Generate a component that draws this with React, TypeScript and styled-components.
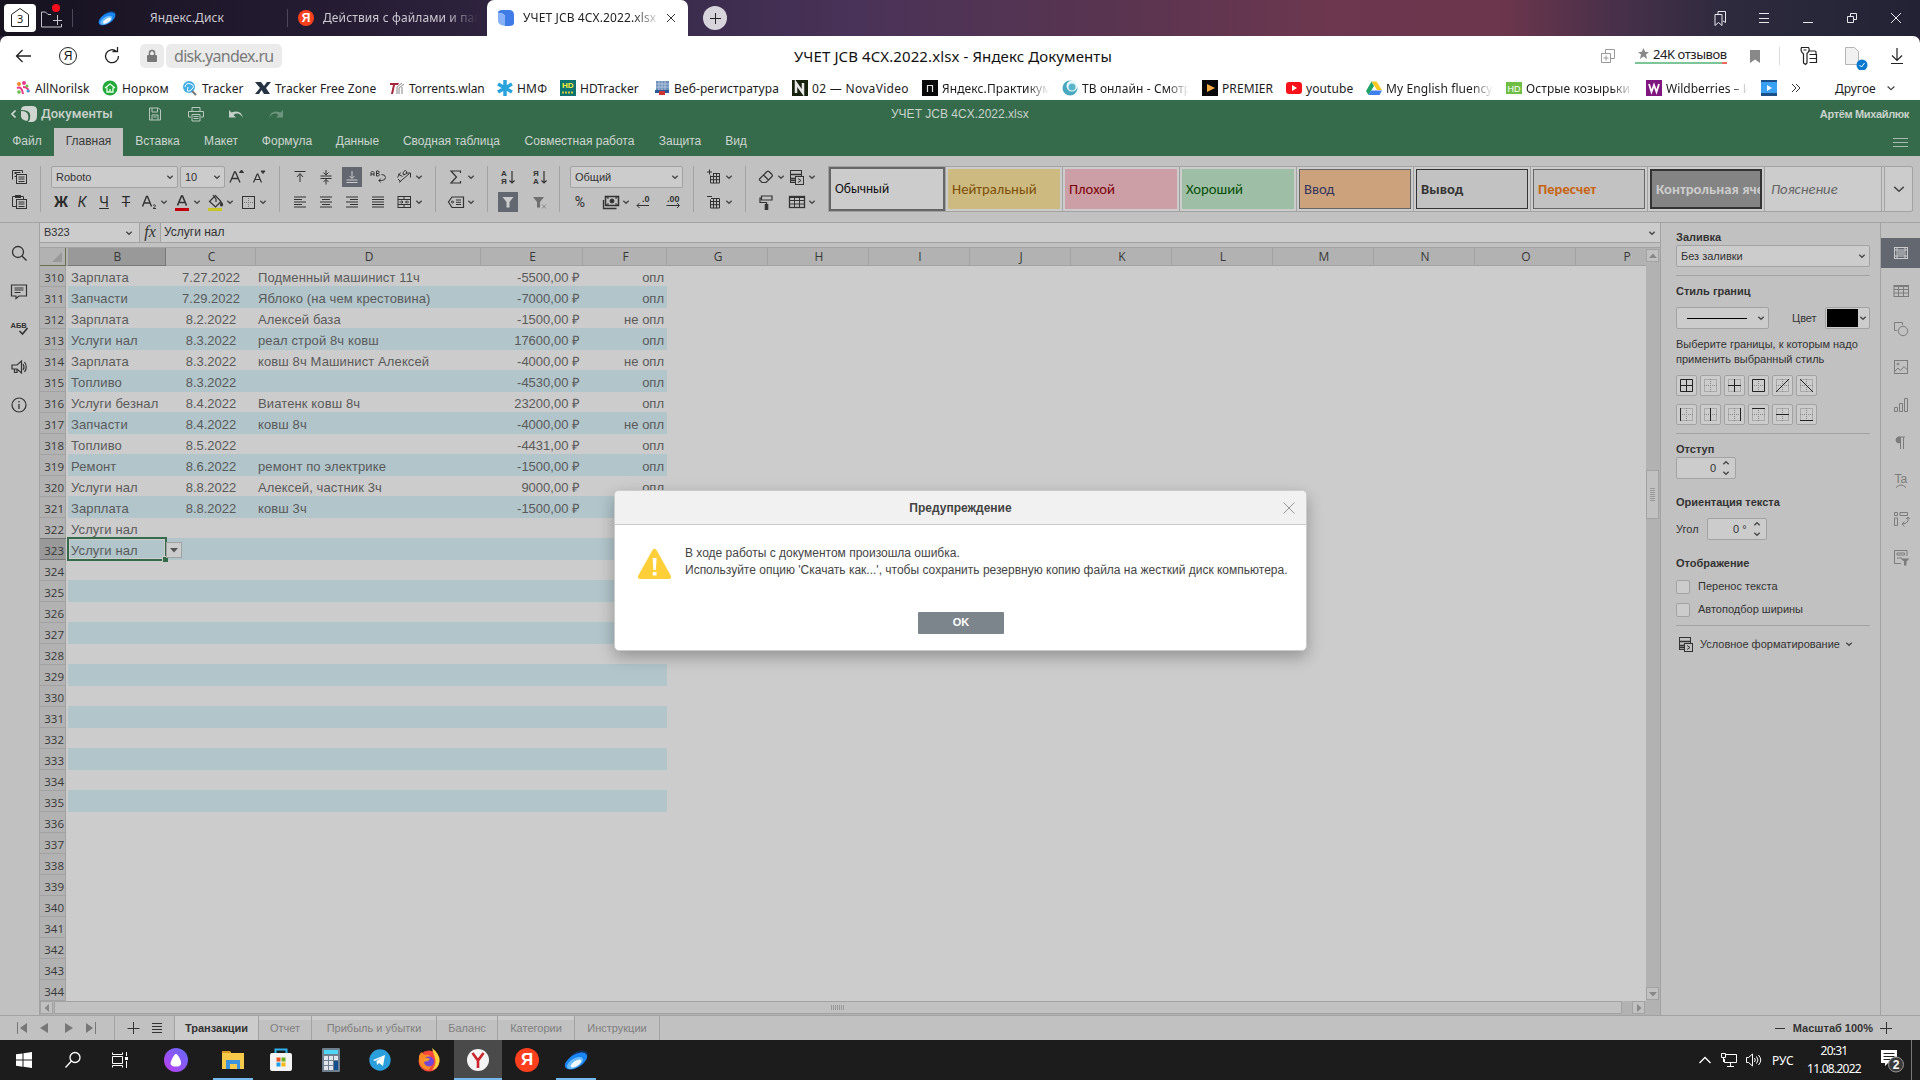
import React from 'react';
import styled, { createGlobalStyle, css } from 'styled-components';

const INK = '#333333';
const LINE = '#a2a2a2';
const PANEL = '#c1c1c1';
const FIELD = '#cccccc';
const GREEN = '#356b4b';
const ARIAL = '"Liberation Sans", Arial, sans-serif';
const SEGOE = '"Noto Sans", "Open Sans", sans-serif';

const Global = createGlobalStyle`
  * { box-sizing: border-box; }
  html, body { margin: 0; padding: 0; overflow: hidden; background: ${PANEL}; }
  svg { display: block; flex: none; }
`;

/* ---------- icons ---------- */

const ICONS: Record<string, React.ReactNode> = {
  copy: <><path d="M3.500 12.500V3.500H13.500V6M5.500 6.500h2M5.500 9.500h2M5.500 5.500h6" /><rect x="7.500" y="7.500" width="10" height="9" fill={PANEL} /><path d="M9.500 10h6M9.500 12h6M9.500 14.500h6" /></>,
  paste: <><path d="M7 14.500H3.500V4.500h11V7" /><path d="M6 4.500h6" strokeWidth="3" /><rect x="7.500" y="7.500" width="10" height="9" fill={PANEL} /><path d="M9.500 10h6M9.500 12h6M9.500 14.500h6" /></>,
  incFont: <><path d="M3 15.500L7.500 5h1L13 15.500M5 11.500h6" strokeWidth="1.300" /><path d="M12.500 5.500L14.500 3l2 2.500z" fill={INK} /></>,
  decFont: <><path d="M4.500 15.500L8.200 7h.6l3.700 8.500M6 12.500h5" strokeWidth="1.200" /><path d="M12 4h4l-2 2.500z" fill={INK} /></>,
  sub: <><path d="M2.500 14.500L6.500 4.500h1l4 10M4.500 11h5.500" strokeWidth="1.400" /><path d="M13 13.500q1.500-1.500 2.500 0q0 1-2.500 3h3" strokeWidth="1" /></>,
  color: <><path d="M5.500 13.500L9.500 4h1l4 9.500M7.500 10.500h5" strokeWidth="1.600" /><path d="M3 17.500h14" stroke="#c4000c" strokeWidth="3" /></>,
  fill: <><path d="M4.500 9.500l6-6 5.500 6-5.500 5.500zM8 3l3 4v3" strokeWidth="1.200" /><path d="M16.500 10q2.500 4 0 4t0-4" fill={INK} /><path d="M3 17.500h14" stroke="#c6c626" strokeWidth="3" /></>,
  border: <><rect x="4.500" y="4.500" width="12" height="12" /><path d="M10.500 6v10M6 10.500h10" strokeDasharray="1 1" stroke="#777" /></>,
  top: <><path d="M4.500 4.500h11M7 10l3-3.500 3 3.500M10 7v8" /></>,
  middle: <><path d="M4.500 9h11M4.500 11.500h11M10 3v5M10 12.500v5M7.500 5.500L10 8l2.500-2.500M7.500 15l2.500-2.500 2.500 2.500" /></>,
  bottom: <><path d="M4.500 13h11M4.500 15.500h11M10 4v7M7.500 9l2.500 2.500L12.500 9" stroke="#ccc" /></>,
  wrap: <><path d="M3 9V5.500L4.500 4 6 5.500V9M3 7h3M8.500 4v5h2q2-1.200 0-2.500q1.500-1.500 0-2.500zM8.500 6.500h2M13.500 7.500q4 0 4 3t-4 3h-2.500M12.800 11.500l-2 2 2 2" /></>,
  orient: <><path d="M5 15.500l10.500-9M12 6h4.500v4.500M4 7l4.500 2.500M3.500 10.500l3-5M4 12l3 3M9 6q2-4 3.500-1.500T9.500 8z" /></>,
  left: <path d="M4 4.500h12M4 7h8M4 9.500h12M4 12h8M4 14.500h12" transform="translate(0 .5)" />,
  center: <path d="M4 5h12M6 7.500h8M4 10h12M6 12.500h8M4 15h12" />,
  right: <path d="M4 5h12M8 7.500h8M4 10h12M8 12.500h8M4 15h12" />,
  justify: <path d="M4 5h12M4 7.500h12M4 10h12M4 12.500h12M4 15h12" />,
  merge: <><rect x="4" y="4.500" width="12.500" height="11" /><path d="M4 7.500h12.500M4 12.500h12.500M10 4.500v3M10 12.500v3M5.500 10h3.500M11.500 10H15M7.500 8.500L9 10l-1.500 1.500M13 8.500L11.500 10l1.500 1.500" /></>,
  sum: <path d="M14.500 6V4H5l5.500 6L5 16h9.500v-2" strokeWidth="1.200" />,
  tag: <><path d="M6 5h11.500v10.500H6L2.500 10z" strokeWidth="1.200" /><circle cx="6.500" cy="10" r="1" /><path d="M10 8h5M10 10.300h5M10 12.500h5" /></>,
  sortA: <><path d="M14 4v12M11.500 13.500L14 16l2.500-2.500" strokeWidth="1.200" /><text x="3" y="9" fontSize="8" fontWeight="700">А</text><text x="3" y="17" fontSize="8" fontWeight="700">Я</text></>,
  sortZ: <><path d="M14 4v12M11.500 13.500L14 16l2.500-2.500" strokeWidth="1.200" /><text x="3" y="9" fontSize="8" fontWeight="700">Я</text><text x="3" y="17" fontSize="8" fontWeight="700">А</text></>,
  funnel: <path d="M4.500 5h11l-4 5v5.500h-3V10z" fill="#ccc" stroke="none" />,
  funnelX: <><path d="M3 5h11l-4 5v5.500H7V10z" fill="#6f6f6f" stroke="none" /><path d="M12 12.500l4 4M16 12.500l-4 4" stroke="#888" /></>,
  money: <><path d="M2.500 8v8.500h13" strokeWidth="1.300" /><rect x="4.500" y="4.500" width="13" height="9" strokeWidth="1.500" /><circle cx="11" cy="9" r="2" fill={INK} /><path d="M5 5h2v2M17 5h-2v2M5 13h2v-2M17 13h-2v-2" /></>,
  dec0: <><text x="9" y="10" fontSize="9" fontWeight="700">.0</text><path d="M16 13.500H4M6.500 11L4 13.500 6.500 16" /></>,
  dec00: <><text x="4" y="10" fontSize="9" fontWeight="700">.00</text><path d="M3.500 13.500H16M14 11l2.500 2.500L14 16" /></>,
  insCell: <><path d="M3 5h5M5.500 2.500v5M6.500 8.500v7.500h9V6.500H9M9.500 6.500V16M12.500 6.500V16M6.500 9.500h9M6.500 12.700h9" /></>,
  delCell: <><path d="M3 4.500h5M6.500 7.500v8.500h9V6.500H7M9.500 6.500V16M12.500 6.500V16M6.500 9.500h9M6.500 12.700h9" /></>,
  eraser: <><path d="M3.500 12l7.500-7.500q1-.8 2 0l3 3q.8 1 0 2L10 15.500H6L3.500 13zM7.500 8l5 5" strokeWidth="1.200" /></>,
  cond: <><rect x="3.500" y="3.500" width="11" height="12" /><path d="M3.500 7.500h11M3.500 11.500h11M4 13.500h4" strokeWidth="1.300" /><rect x="8.500" y="9.500" width="8" height="8" fill={PANEL} /><path d="M11 11.500l3 2-3 2" /></>,
  painter: <><path d="M5.500 4h10.500v4H5.500zM5.500 6H4v4.500h6.500V13" strokeWidth="1.200" /><rect x="9.200" y="12.500" width="2.600" height="5" fill={INK} /></>,
  table: <><rect x="2.500" y="4.500" width="15" height="11" strokeWidth="1.300" /><path d="M2.500 5.500h15M2.500 8.500h15M2.500 12h15M7.500 5v10M12.500 5v10" /></>,
  search: <><circle cx="9" cy="9" r="5.500" strokeWidth="1.300" /><path d="M13 13l4.500 4.500" strokeWidth="1.400" /></>,
  comment: <><path d="M2.500 4h15v11H10l-3 2.500V15H2.500z" strokeWidth="1.200" /><path d="M5.500 7h9M5.500 9h9M5.500 11.500h6" /></>,
  spell: <><text x="1.500" y="9" fontSize="7.500" fontWeight="700">АБВ</text><path d="M10.500 12l3 3 5-6" strokeWidth="1.600" /></>,
  horn: <><path d="M3 8h5l4.500-4v12L8 12H3zM5.500 12v3.500h2.500V12M14 7q2 3 0 6M15.500 5q3.500 5 0 10" strokeWidth="1.200" /></>,
  info: <><circle cx="10" cy="10" r="7" strokeWidth="1.200" /><path d="M10 9v5M10 6v1.500" strokeWidth="1.300" /></>,
  rCell: <><rect x="3.500" y="4.500" width="13" height="11" stroke="#ccc" /><path d="M3.500 7h13M3.500 13h13M6 4.500v11M14 4.500v11" stroke="#ccc" /><rect x="7" y="8" width="6" height="4" fill="#9a9da2" stroke="none" /></>,
  rTable: <><rect x="3" y="4.500" width="14.500" height="11" /><path d="M3 5.500h14M3 8.500h14M3 12h14M7.500 5v10M12.500 5v10" /></>,
  rShape: <><path d="M6 11.500H3.500V3.500h8V6" /><circle cx="12" cy="12" r="4.700" /></>,
  rImage: <><rect x="3.500" y="3.500" width="13" height="13" /><circle cx="7" cy="7" r="1" /><path d="M4 14l3-3 2.500 2.500L13 9.500l3.500 3.500" /></>,
  rChart: <path d="M3.500 12.500h3v4h-3zM8.500 8.500h3v8h-3zM13.500 3.500h3v13h-3z" />,
  rPara: <><path d="M8.500 10q-3.500 0-3.500-3t3.500-3z" fill="#7c7c7c" /><path d="M7 4h7M9.500 4v12M12.500 4v12" /></>,
  rArt: <><text x="3.500" y="11.500" fontSize="12" fill="#7c7c7c">Ta</text><path d="M5 16.500q5-5 10 0" /></>,
  rPivot: <><path d="M3.500 3.500h3v3h-3zM9 3.500h7.500v3H9zM3.500 9h3v7.500h-3zM17 8v4q-1 3-6 3M13.500 12.500L11 15l2.500 2.500M15 10l2-2 2 2" /></>,
  rSlicer: <><path d="M10 16.500H3.500V3.500h12.500V9M6 6h7.500v2H6zM6 11h5" /><path d="M9.500 11.500h9l-3 3v4h-2.500v-4z" fill="#7c7c7c" stroke="none" /></>,
  save: <><path d="M4.500 4h9l2 2v10h-11zM7 4v4h5.500V4M7 16v-5h6v5M8.500 13h3" /></>,
  print: <><path d="M6 7V3.500h8V7M5 13H2.500V7.500h15V13H15M6 10.500h8v6.500H6zM7.500 12.500h5M7.500 14.500h5" /></>,
  undo: <path d="M3 6v7.500h7L7.500 11q5-4 9.500 3Q15 5 5.500 8.500z" fill="#c4d0c8" stroke="none" />,
  redo: <path d="M17 6v7.500h-7l2.500-2.500Q7.500 7 3 14 5 5 14.500 8.500z" fill="#6d957d" stroke="none" />,
};

const Glyph = styled.svg<{ $ml?: number; $ink?: string }>`
  margin-left: ${p => p.$ml ?? 0}px;
  fill: none;
  stroke: ${p => p.$ink ?? INK};
  stroke-width: 1;
  text { fill: ${p => p.$ink ?? INK}; stroke: none; font-family: ${ARIAL}; }
`;
const I = ({ n, ml, ink, s = 20 }: { n: string; ml?: number; ink?: string; s?: number }) => (
  <Glyph width={s} height={s} viewBox="0 0 20 20" $ml={ml} $ink={ink}>{ICONS[n]}</Glyph>
);
const Chev = ({ ml = 1, up, s = 8, sw = 1.4 }: { ml?: number; up?: boolean; s?: number; sw?: number }) => (
  <Glyph width={s} height={s} viewBox="0 0 8 8" $ml={ml} $ink="#484848">
    <path d={up ? 'M1.300 5.200L4 2.700l2.700 2.500' : 'M1.300 2.800L4 5.300l2.700-2.500'} strokeWidth={sw} />
  </Glyph>
);

/* ---------- browser chrome ---------- */

const Screen = styled.div`
  width: 1920px; height: 1080px; overflow: hidden; position: relative;
  display: flex; flex-direction: column;
  background: ${PANEL}; color: ${INK}; font: 11px/1 ${ARIAL};
`;
const TabStrip = styled.div`
  height: 36px; flex: none; display: flex; align-items: center; padding-left: 4px;
  background: linear-gradient(90deg, #16121f 0, #251c33 340px, #3c2c4e 700px, #4a3358 860px, #583450 1100px, #6c374f 1330px, #6c364c 1500px, #47304a 1620px, #2d2a3e 1730px, #232234 1920px);
`;
const HomeBox = styled.div`
  width: 32px; height: 28px; border-radius: 4px; background: #fff; display: grid; place-items: center;
`;
const TabLabel = styled.div<{ $w: number; $ml?: number; $dark?: boolean }>`
  width: ${p => p.$w}px; margin-left: ${p => p.$ml ?? 0}px; overflow: hidden; white-space: nowrap;
  font: 12px/20px ${SEGOE}; letter-spacing: 0.12px;
  color: ${p => (p.$dark ? '#222' : '#cbc8d0')};
`;
const fade = css`mask-image: linear-gradient(90deg, #000 80%, transparent);`;
const FadeLabel = styled(TabLabel)`${fade}`;
const TabDivider = styled.div<{ $ml: number }>`width: 1px; height: 18px; background: #4d475a; margin-left: ${p => p.$ml}px;`;
const ActiveTab = styled.div`
  width: 201px; height: 36px; margin-left: 9px; padding-left: 11px; background: #fff; border-radius: 7px 7px 0 0;
  display: flex; align-items: center;
`;
const PlusTab = styled.div`
  width: 24px; height: 24px; border-radius: 50%; margin-left: 15px; background: #d8d4dc; display: grid; place-items: center;
`;
const WinButtons = styled.div`
  margin-left: auto; margin-right: 2px; display: flex;
  svg { width: 44px; height: 20px; }
`;
const AddressWrap = styled.div`background: #2a2138; height: 38px; flex: none;`;
const AddressBar = styled.div`
  height: 38px; background: #fff; border-radius: 7px 7px 0 0; display: flex; align-items: center; padding: 2px 0 0 12px;
`;
const LockBox = styled.div`width: 24px; height: 24px; margin-left: 18px; border-radius: 5px; background: #ebebeb; display: grid; place-items: center;`;
const Domain = styled.div`
  width: 116px; height: 24px; margin-left: 2px; padding-left: 8px; border-radius: 5px; background: #ebebeb; color: #7a7a7a;
  font: 16px/24px ${SEGOE}; letter-spacing: -0.7px; white-space: nowrap;
`;
const PageTitle = styled.div`
  margin-left: 512px; width: 320px; font: 15px/24px ${SEGOE}; letter-spacing: 0.1px; color: #111; white-space: nowrap;
`;
const Reviews = styled.div`
  width: 92px; height: 19px; margin: 0 0 3px 19px; display: flex; gap: 4px; align-items: center; padding-left: 3px;
  font: 13px/16px ${SEGOE}; letter-spacing: -0.45px; color: #222; white-space: nowrap;
  border-bottom: 2px solid; border-image: linear-gradient(90deg, #7cc598 94%, #ea6a62 94%) 1;
`;
const Bookmarks = styled.div`height: 26px; flex: none; background: #fff; display: flex; align-items: center; padding: 2px 0 0 15px;`;
const Bookmark = styled.div<{ $w: number; $fade?: boolean; $ls?: number }>`
  width: ${p => p.$w}px; flex: none; display: flex; align-items: center; gap: 4px;
  font: 12px/20px ${SEGOE}; color: #1c1c1c; letter-spacing: ${p => p.$ls ?? 0}px; white-space: nowrap;
  span { padding-top: 1px; overflow: hidden; width: ${p => p.$w - 33}px; ${p => p.$fade && fade} ${p => !p.$fade && 'overflow: visible;'} }
`;

const marks: [string, number, React.ReactNode, boolean, number][] = [
  ['AllNorilsk', 87, <><circle cx="4" cy="4" r="2" fill="#f08a24" /><circle cx="9" cy="3" r="2" fill="#e8388a" /><path d="M2 8q5-2 6 6M8 7q5 0 6 5" stroke="#e8388a" strokeWidth="2" fill="none" /><circle cx="12" cy="6" r="1.500" fill="#6bbd45" /><circle cx="4" cy="12" r="1.800" fill="#6bbd45" /><circle cx="13" cy="11" r="1.500" fill="#3aa6dd" /></>, false, 0.1],
  ['Норком', 80, <><circle cx="8" cy="8" r="7.500" fill="#23a83a" /><path d="M3 8l5-4 5 4M5 7.500V12h6V7.500M8 9v3" stroke="#eaffea" strokeWidth="1.300" fill="none" /></>, false, 0.2],
  ['Tracker', 73, <><circle cx="7" cy="7" r="6" fill="#42aee4" /><path d="M3 7q1-5 6-3t0 6-3-3" stroke="#fff" fill="none" /><path d="M10 11l4 4" stroke="#777" strokeWidth="2" /></>, false, 0],
  ['Tracker Free Zone', 134, <path d="M0 2h6l3 4 3-4h4l-5 6 4 6H9L6.500 10 4 14H0l5-6z" fill="#263342" />, false, 0.05],
  ['Torrents.wlan', 108, <><path d="M1 3h9L9 5H6L4 14H2l2-9H1z" fill="#a5253a" /><path d="M8 14V7l5-4M10 14V8l5-4M13 14V7" stroke="#888" fill="none" /></>, false, -0.1],
  ['НМФ', 63, <path d="M8 0v16M1 4l14 8M15 4L1 12" stroke="#28a3dc" strokeWidth="3.500" />, false, 0.2],
  ['HDTracker', 94, <><rect width="16" height="16" fill="#0e7471" /><text x="2" y="8" fontSize="8" fontWeight="700" fill="#ffef3c">HD</text><path d="M2 12.500h12" stroke="#d5c93c" strokeWidth="2" strokeDasharray="2 1" /></>, false, 0],
  ['Веб-регистратура', 138, <><rect x="2" y="1" width="13" height="9" fill="#6d8fbc" /><path d="M2 4h13M2 7h13M5 1v9M8 1v9M11 1v9" stroke="#c9d7e8" strokeWidth=".7" /><path d="M1 10h14v3H1z" fill="#295998" /><path d="M5 11h6v4H5z" fill="#cc3434" /></>, false, 0.12],
  ['02 — NovaVideo', 130, <><rect width="16" height="16" fill="#16220c" /><path d="M4 13V3l7 10V3" stroke="#e8e8e8" strokeWidth="2.500" fill="none" /></>, false, 0.3],
  ['Яндекс.Практикум', 140, <><rect width="16" height="16" fill="#080808" /><path d="M5.500 12V5.500h5V12" stroke="#ddd" strokeWidth="1.200" fill="none" /></>, true, 0.1],
  ['ТВ онлайн - Смотреть', 140, <><circle cx="8" cy="8" r="7.500" fill="#48a8c0" /><circle cx="10" cy="6" r="5.500" fill="#e8f8fb" /><circle cx="10" cy="7" r="3.500" fill="#58b5ca" /></>, true, 0.1],
  ['PREMIER', 84, <><rect width="16" height="16" fill="#080808" /><path d="M5 4l8 4-8 4z" fill="#f5a940" /></>, false, 0.1],
  ['youtube', 80, <><rect y="2" width="16" height="12" rx="3" fill="#f6121a" /><path d="M6 5l5 3-5 3z" fill="#fff" /></>, false, 0.1],
  ['My English fluency', 140, <><path d="M5.500 1.500h5L16 10h-5z" fill="#fdc921" /><path d="M5.500 1.500L0 11l2.500 4L8 6z" fill="#20a464" /><path d="M2.500 15L5 10.500h11L13.500 15z" fill="#3f7fee" /></>, true, 0.1],
  ['Острые козырьки', 140, <><rect y="2" width="16" height="12" fill="#6fbe44" /><text x="1.500" y="11.500" fontSize="9" fill="#fff">HD</text></>, true, 0.1],
  ['Wildberries – Ин', 115, <><rect width="16" height="16" fill="#80167f" /><path d="M3 4l2.500 8L8 5l2.500 7L13 4" stroke="#fff" strokeWidth="1.800" fill="none" /></>, true, 0],
];

const LeftArrow = () => <svg width="20" height="20" viewBox="0 0 20 20" fill="none" stroke="#222" strokeWidth="1.300"><path d="M19 10H4.500M10.500 4l-6 6 6 6" /></svg>;
const DiskIcon = ({ s = 18, ml = 0 }: { s?: number; ml?: number }) => (
  <Glyph width={s} height={s} viewBox="0 0 24 24" $ml={ml}>
    <g stroke="none">
      <ellipse cx="15" cy="8" rx="9" ry="5" transform="rotate(-18 15 8)" fill="#14305a" />
      <ellipse cx="12" cy="13" rx="12.500" ry="6.500" transform="rotate(-32 12 13)" fill="#1b86f6" />
      <ellipse cx="11" cy="15" rx="9" ry="4.500" transform="rotate(-32 11 15)" fill="#6bbcff" />
      <ellipse cx="12" cy="15.500" rx="6" ry="2.600" transform="rotate(-32 12 15.500)" fill="#f3faff" />
    </g>
  </Glyph>
);
const YaText = styled.div<{ $s: number; $ml?: number; $f: number }>`
  width: ${p => p.$s}px; height: ${p => p.$s}px; margin-left: ${p => p.$ml ?? 0}px; border-radius: 50%; flex: none;
  background: #fc3f1d; color: #fff; font: 700 ${p => p.$f}px/${p => p.$s}px ${ARIAL}; text-align: center;
`;
const YaRing = styled.div`
  width: 18px; height: 18px; margin-left: 27px; border: 1px solid #222; border-radius: 50%; font: 12px/16px ${ARIAL}; text-align: center; color: #111;
`;

function BrowserTop() {
  return (
    <>
      <TabStrip>
        <HomeBox>
          <svg width="24" height="22" viewBox="0 0 24 22" fill="none" stroke="#222"><path d="M3.500 20V8L12 2l8.500 6v12z" transform="translate(0 -.5)" /><text x="9" y="15.500" fontSize="11" fill="#222" stroke="none" fontFamily="Noto Sans">3</text></svg>
        </HomeBox>
        <svg width="28" height="30" viewBox="0 0 28 30" fill="none" stroke="#c8c5cc"><path d="M16 9.500h-3L10.500 7H6.500v15h20v-3M22.500 10v10M18 15.500h9" transform="translate(-1 2)" /><circle cx="20" cy="5" r="4" fill="#fb0d1b" stroke="none" /></svg>
        <TabDivider $ml={8} />
        <DiskIcon s={18} ml={25} />
        <TabLabel $w={137} $ml={34}>Яндекс.Диск</TabLabel>
        <TabDivider $ml={0} />
        <YaText $s={16} $ml={10} $f={12}>Я</YaText>
        <FadeLabel $w={155} $ml={9}>Действия с файлами и папками</FadeLabel>
        <ActiveTab>
          <svg width="16" height="18" viewBox="0 0 16 18"><path d="M0 4q0-3 4-3h7q5 0 5 5v8q0 3-5 3H7V8q0-4-7-4z" fill="#3f7ce8" /><path d="M0 4q7 0 7 4v9q-7-1-7-5z" fill="#86b1f8" /></svg>
          <FadeLabel $w={138} $ml={9} $dark>УЧЕТ JCB 4CX.2022.xlsx -</FadeLabel>
          <Glyph width="10" height="10" $ml={5} $ink="#333"><path d="M1 1l8 8M9 1l-8 8" /></Glyph>
        </ActiveTab>
        <PlusTab><svg width="13" height="13" stroke="#222"><path d="M6.500 1v11M1 6.500h11" /></svg></PlusTab>
        <WinButtons>
          <svg viewBox="0 0 44 20" fill="none" stroke="#e8e8ec"><path d="M17 6.500h7v11l-3.500-3-3.500 3zM20 6V3.500h7.500v11L25 13" /></svg>
          <svg viewBox="0 0 44 20" fill="none" stroke="#e8e8ec"><path d="M17 5.500h10M17 10.500h10M17 14.500h10" /></svg>
          <svg viewBox="0 0 44 20" fill="none" stroke="#e8e8ec"><path d="M17 14.500h10" /></svg>
          <svg viewBox="0 0 44 20" fill="none" stroke="#e8e8ec"><path d="M17.500 8.500h6v6h-6zM20.500 8V5.500h6v6H24" /></svg>
          <svg viewBox="0 0 44 20" fill="none" stroke="#e8e8ec"><path d="M17 5l10 10M27 5L17 15" /></svg>
        </WinButtons>
      </TabStrip>
      <AddressWrap>
        <AddressBar>
          <LeftArrow />
          <YaRing>Я</YaRing>
          <Glyph width="20" height="20" viewBox="0 0 20 20" $ml={25} $ink="#222"><path d="M14.500 5.500A6.500 6.500 0 1 0 16.500 10M10.500 5.500h5V1" strokeWidth="1.300" /></Glyph>
          <LockBox><svg width="12" height="14" fill="#777"><rect x="1" y="6" width="10" height="7" rx="1" /><path d="M3.500 6V4a2.500 2.500 0 0 1 5 0v2" fill="none" stroke="#777" strokeWidth="1.500" /></svg></LockBox>
          <Domain>disk.yandex.ru</Domain>
          <PageTitle>УЧЕТ JCB 4CX.2022.xlsx - Яндекс Документы</PageTitle>
          <Glyph width="16" height="18" viewBox="0 0 16 18" $ml={486} $ink="#999"><path d="M5.500 6V2.500h9v9H11M1.500 6.500h9v9h-9zM6 8.500v5M3.500 11h5" /></Glyph>
          <Reviews><svg width="11" height="11" viewBox="0 0 20 20"><path d="M10 0l3 7 7 .5-5.500 4.500L16.500 20 10 15.500 3.500 20l2-8L0 7.500 7 7z" fill="#888" /></svg>24K отзывов</Reviews>
          <Glyph width="12" height="15" viewBox="0 0 12 15" $ml={22}><path d="M1 1h10v13l-5-3.500L1 14z" fill="#888" stroke="none" /></Glyph>
          <Glyph width="1" height="18" $ml={18}><path d="M.5 0v18" stroke="#ddd" /></Glyph>
          <Glyph width="20" height="20" viewBox="0 0 20 20" $ml={19} $ink="#222"><path d="M2.500 1.500h7q2 3-1.500 6V17L6.500 18.500 4.500 17V8Q1 5 2.500 1.500zM4.500 4h3M10.500 5.500V5h5.500q1 0 1 1v2.500M10.500 8.500h7v8h-7M10.500 12.500h7" strokeWidth="1.200" /></Glyph>
          <Glyph width="26" height="28" viewBox="0 0 26 28" $ml={24}><path d="M2.500 5.500h9l4 4v13h-13z" fill="#f1f1f1" stroke="#b5b5b5" /><circle cx="19" cy="23" r="5.500" fill="#0878d0" stroke="none" /><path d="M16.500 23l2 2 3-4" stroke="#fff" /></Glyph>
          <Glyph width="20" height="20" viewBox="0 0 20 20" $ml={18} $ink="#222"><path d="M10 2v12M5 9.500l5 5 5-5M4 17.500h12" strokeWidth="1.200" /></Glyph>
        </AddressBar>
      </AddressWrap>
      <Bookmarks>
        {marks.map(([t, w, ic, f, ls]) => (
          <Bookmark key={t} $w={w} $fade={f} $ls={ls}><svg width="16" height="16" viewBox="0 0 16 16" fontFamily="Liberation Sans">{ic}</svg><span>{t}</span></Bookmark>
        ))}
        <Bookmark $w={29}><svg width="16" height="16"><rect width="16" height="16" fill="#1c4f86" /><rect y="2" width="16" height="11" fill="#3aa0f4" /><path d="M6 5l5 3-5 3z" fill="#fff" /></svg></Bookmark>
        <Bookmark $w={45}><svg width="12" height="12" fill="none" stroke="#333"><path d="M2 2l4 4-4 4M6 2l4 4-4 4" /></svg></Bookmark>
        <Bookmark $w={80}><span>Другое</span><Chev ml={0} s={10} sw={1} /></Bookmark>
      </Bookmarks>
    </>
  );
}

/* ---------- editor header ---------- */

const DocBar = styled.div`height: 28px; flex: none; background: ${GREEN}; display: flex; align-items: center; padding: 0 11px 0 9px; color: #c9d2cc;`;
const Brand = styled.div`width: 105px; font: 500 13px/20px Roboto, ${ARIAL}; letter-spacing: 0; margin-left: 4px;`;
const DocTitle = styled.div`margin: 0 auto 0 605px; font: 12px/20px ${ARIAL};`;
const UserName = styled.div`font: 700 11px/20px ${ARIAL}; letter-spacing: -0.35px;`;
const MenuBar = styled.div`height: 28px; flex: none; background: ${GREEN}; display: flex; align-items: stretch;`;
const MenuTab = styled.div<{ $on?: boolean; $w: number }>`
  width: ${p => p.$w}px; text-align: center; font: 12px/26px ${ARIAL}; white-space: nowrap;
  background: ${p => (p.$on ? PANEL : 'transparent')}; color: ${p => (p.$on ? '#3a3a3a' : '#cdd5d0')};
`;
const MenuBurger = styled.svg`margin: 9px 12px 0 auto;`;

const Toolbar = styled.div`height: 67px; flex: none; display: flex; padding-top: 10px; background: ${PANEL}; border-bottom: 1px solid ${LINE};`;
const Group = styled.div<{ $w: number; $last?: boolean; $pl?: number }>`
  width: ${p => p.$w}px; height: 46px; padding-left: ${p => p.$pl ?? 10}px; flex: none; display: flex; flex-direction: column; justify-content: space-between;
  border-right: ${p => (p.$last ? 0 : 1)}px solid ${LINE};
`;
const Row = styled.div`height: 21px; display: flex; align-items: center;`;
const Select = styled.div<{ $w: number; $h?: number; $ml?: number }>`
  width: ${p => p.$w}px; height: ${p => p.$h ?? 22}px; margin-left: ${p => p.$ml ?? 0}px; padding: 0 3px 0 4px; flex: none;
  display: flex; align-items: center; justify-content: space-between; border: 1px solid ${LINE}; border-radius: 2px; background: ${FIELD};
  font: 11px/20px ${ARIAL}; color: ${INK}; white-space: nowrap;
`;
const Letter = styled.div<{ $ml?: number; $b?: boolean; $i?: boolean; $u?: boolean; $s?: boolean }>`
  width: 20px; margin-left: ${p => p.$ml ?? 0}px; text-align: center; font: ${p => (p.$i ? 'italic' : 'normal')} ${p => (p.$b ? 700 : 400)} 14px/20px Roboto, ${ARIAL};
  text-decoration: ${p => (p.$u ? 'underline' : p.$s ? 'line-through' : 'none')}; color: #2b2b2b;
`;
const OnBox = styled.div<{ $ml?: number }>`width: 20px; height: 20px; margin-left: ${p => p.$ml ?? 0}px; background: #636870;`;

const Gallery = styled.div`
  width: 1056px; height: 46px; display: flex; flex: none; border: 1px solid ${LINE}; border-right: 0; background: ${FIELD};
`;
const Tile = styled.div`width: 117px; height: 44px; padding: 2px; flex: none; border-right: 1px solid ${LINE};`;
const FirstTile = styled(Tile)`padding: 0;`;
const Swatch = styled.div<{ $bg: string; $fg: string; $bd?: string; $f: string }>`
  width: 100%; height: 100%; padding-left: 4px; overflow: hidden; white-space: nowrap; display: flex; align-items: center;
  background: ${p => p.$bg}; color: ${p => p.$fg}; border: ${p => p.$bd ?? '0'}; font: ${p => p.$f} Carlito, "Open Sans", ${ARIAL};
`;
const GalleryMore = styled.div`
  width: 29px; height: 46px; border: 1px solid ${LINE}; border-radius: 0 2px 2px 0; background: ${FIELD}; display: grid; place-items: center;
`;
const GalleryGap = styled.div`width: 2px; background: ${FIELD};`;

function EditorHeader() {
  const menus: [string, number][] = [['Файл', 54], ['Главная', 69], ['Вставка', 69], ['Макет', 58], ['Формула', 74], ['Данные', 67], ['Сводная таблица', 121], ['Совместная работа', 135], ['Защита', 66], ['Вид', 46]];
  return (
    <>
      <DocBar>
        <svg width="8" height="12" fill="none" stroke="#d4dcd6" strokeWidth="1.600"><path d="M6.500 2.500L3 6l3.500 3.500" /></svg>
        <Glyph width="16" height="16" viewBox="0 0 16 16" $ml={4}><g stroke="none"><path d="M0 4q0-4 5-4h6q5 0 5 4v6q0 6-6 6H7q3-3 2-8Q8 4 0 4z" fill="#cfd5d1" /><path d="M0 5q6 0 7 4t-1 6Q0 14 0 10z" fill="#cfd5d1" /></g></Glyph>
        <Brand>Документы</Brand>
        <I n="save" ml={-1} ink="#b9c8bf" /><I n="print" ml={21} ink="#b9c8bf" /><I n="undo" ml={20} /><I n="redo" ml={20} />
        <DocTitle>УЧЕТ JCB 4CX.2022.xlsx</DocTitle>
        <UserName>Артём Михайлюк</UserName>
      </DocBar>
      <MenuBar>
        {menus.map(([t, w]) => <MenuTab key={t} $w={w} $on={t === 'Главная'}>{t}</MenuTab>)}
        <MenuBurger width="15" height="12" stroke="#a9bbb0"><path d="M0 1.500h15M0 5.500h15M0 9.500h15" /></MenuBurger>
      </MenuBar>
      <Toolbar>
        <Group $w={41} $pl={9}><Row><I n="copy" /></Row><Row><I n="paste" /></Row></Group>
        <Group $w={239}>
          <Row><Select $w={127}>Roboto<Chev /></Select><Select $w={45} $ml={2}>10<Chev /></Select><I n="incFont" ml={2} /><I n="decFont" ml={2} /></Row>
          <Row>
            <Letter $b>Ж</Letter><Letter $ml={1} $i>К</Letter><Letter $ml={2} $u>Ч</Letter><Letter $ml={2} $s>Т</Letter>
            <I n="sub" ml={4} /><Chev ml={0} /><I n="color" ml={4} /><Chev /><I n="fill" ml={4} /><Chev /><I n="border" ml={4} /><Chev />
          </Row>
        </Group>
        <Group $w={156}>
          <Row><I n="top" /><I n="middle" ml={6} /><OnBox $ml={6}><I n="bottom" /></OnBox><I n="wrap" ml={6} /><I n="orient" ml={6} /><Chev /></Row>
          <Row><I n="left" /><I n="center" ml={6} /><I n="right" ml={6} /><I n="justify" ml={6} /><I n="merge" ml={6} /><Chev /></Row>
        </Group>
        <Group $w={52}><Row><I n="sum" /><Chev /></Row><Row><I n="tag" /><Chev /></Row></Group>
        <Group $w={72}><Row><I n="sortA" /><I n="sortZ" ml={12} /></Row><Row><OnBox><I n="funnel" /></OnBox><I n="funnelX" ml={12} /></Row></Group>
        <Group $w={134}>
          <Row><Select $w={113}>Общий<Chev /></Select></Row>
          <Row><Letter>%</Letter><I n="money" ml={11} /><Chev /><I n="dec0" ml={3} /><I n="dec00" ml={10} /></Row>
        </Group>
        <Group $w={52}><Row><I n="insCell" /><Chev /></Row><Row><I n="delCell" /><Chev /></Row></Group>
        <Group $w={82} $last>
          <Row><I n="eraser" /><Chev /><I n="cond" ml={2} /><Chev /></Row>
          <Row><I n="painter" /><I n="table" ml={11} /><Chev /></Row>
        </Group>
        <Gallery>
          <FirstTile><Swatch $bg={FIELD} $fg="#111" $bd="2px solid #666" $f="13.300px/16px">Обычный</Swatch></FirstTile>
          <Tile><Swatch $bg="#ccba80" $fg="#7e4e08" $f="14.670px/18px">Нейтральный</Swatch></Tile>
          <Tile><Swatch $bg="#cc9ea5" $fg="#7c0008" $f="14.670px/18px">Плохой</Swatch></Tile>
          <Tile><Swatch $bg="#9ebea5" $fg="#054f08" $f="14.670px/18px">Хороший</Swatch></Tile>
          <Tile><Swatch $bg="#cba27b" $fg="#34345f" $bd="1px solid #666" $f="14.670px/18px">Ввод</Swatch></Tile>
          <Tile><Swatch $bg="#c2c2c2" $fg="#333" $bd="1px solid #333" $f="700 14.670px/18px">Вывод</Swatch></Tile>
          <Tile><Swatch $bg="#c2c2c2" $fg="#c86412" $bd="1px solid #666" $f="700 14.670px/18px">Пересчет</Swatch></Tile>
          <Tile><Swatch $bg="#848484" $fg="#ccc" $bd="2px solid #333" $f="700 14.670px/18px">Контрольная ячейка</Swatch></Tile>
          <Tile><Swatch $bg={FIELD} $fg="#666" $f="italic 14.670px/18px">Пояснение</Swatch></Tile>
          <GalleryGap />
        </Gallery>
        <GalleryMore><Chev ml={0} s={14} sw={0.9} /></GalleryMore>
      </Toolbar>
    </>
  );
}

/* ---------- sheet ---------- */

const Main = styled.div`height: 792px; flex: none; display: flex;`;
const LeftRail = styled.div`width: 40px; flex: none; border-right: 1px solid ${LINE}; padding: 20px 0 0 9px; display: flex; flex-direction: column; gap: 18px;`;
const Center = styled.div`width: 1620px; flex: none; display: flex; flex-direction: column; background: ${PANEL};`;
const FormulaBar = styled.div`height: 20px; flex: none; display: flex; background: ${FIELD}; border-bottom: 1px solid ${LINE}; font: 12px/19px ${ARIAL};`;
const NameBox = styled.div`width: 100px; padding: 0 6px 0 4px; font-size: 11px; display: flex; align-items: center; justify-content: space-between; border-right: 1px solid ${LINE};`;
const Fx = styled.div`width: 21px; background: ${PANEL}; border-right: 1px solid ${LINE}; text-align: center; font: italic 16px/18px "Liberation Serif", serif;`;
const FormulaText = styled.div`flex: 1; padding: 0 4px 0 3px; display: flex; justify-content: space-between; align-items: center;`;
const GridArea = styled.div`flex: 1; margin-top: 4px; border-top: 1px solid ${LINE}; display: flex; min-height: 0;`;
const Sheet = styled.div`width: 1606px; height: 754px; overflow: hidden; background: ${FIELD};`;
const HeadRow = styled.div`height: 18px; display: flex; background: #b2b2b2; border-bottom: 1px solid ${LINE};`;
const Corner = styled.div`
  width: 26px; height: 18px; flex: none; margin-right: 2px; border-right: 1px solid #6c7048; border-bottom: 1px solid #6c7048; background: #b2b2b2;
  padding: 4px 0 0 12px;
`;
const ColHead = styled.div<{ $w: number; $on?: boolean }>`
  width: ${p => p.$w}px; height: 18px; flex: none; padding-left: 2px; text-align: center; font: 12px/18px "Open Sans", ${ARIAL}; color: #383838;
  border-right: 1px solid ${p => (p.$on ? '#777' : LINE)}; border-bottom: 1px solid ${p => (p.$on ? '#777' : LINE)};
  background: ${p => (p.$on ? '#999' : '#b2b2b2')};
`;
const Line = styled.div`height: 21px; display: flex;`;
const RowHead = styled.div<{ $on?: boolean }>`
  width: 26px; flex: none; margin-right: 2px; padding: 1px 1px 0 0; text-align: right; font: 11.500px/21px "Open Sans", ${ARIAL}; color: #383838;
  background: ${p => (p.$on ? '#999' : '#b2b2b2')}; border-right: 1px solid ${LINE}; border-bottom: 1px solid ${p => (p.$on ? '#777' : LINE)};
  ${p => p.$on && 'box-shadow: 0 -1px 0 #777;'}
`;
const Cells = styled.div<{ $band?: boolean }>`
  width: 599px; height: 21px; display: flex; position: relative;
  ${p => p.$band && 'background: #b1c5ca; box-shadow: 0 -1px 0 #b1c5ca;'}
`;
const Cell = styled.div<{ $w: number; $a?: string; $pl?: number }>`
  width: ${p => p.$w}px; flex: none; padding: 2px 3px 0 ${p => p.$pl ?? 3}px; text-align: ${p => p.$a ?? 'left'}; white-space: nowrap;
  font: 13px/19px ${ARIAL}; letter-spacing: ${p => (p.$a ? 0 : 0.12)}px; color: #5a5a5a;
`;
const Cursor = styled.div`position: absolute; left: -1px; top: -2px; width: 100px; height: 24px; border: 2px solid ${GREEN}; box-shadow: inset 0 0 0 1px #ccc;`;
const CursorHandle = styled.div`position: absolute; right: -3px; bottom: -3px; width: 6px; height: 6px; background: ${GREEN}; border: solid ${FIELD}; border-width: 1px 0 0 1px;`;
const CellDrop = styled.div`position: absolute; left: 98px; top: 3px; width: 16px; height: 16px; background: ${FIELD}; border: 1px solid ${LINE}; display: grid; place-items: center;`;

const VScroll = styled.div`width: 14px; height: 754px; background: #b2b2b2; padding: 1px 1px 0 0; display: flex; flex-direction: column; align-items: stretch;`;
const ScrollBtn = styled.div`width: 13px; height: 13px; flex: none; border: 1px solid ${LINE}; background: ${PANEL}; display: grid; place-items: center;`;
const VThumb = styled.div`height: 49px; margin: 208px 0 468px; border: 1px solid ${LINE}; background: ${PANEL}; display: grid; place-items: center;`;
const HScroll = styled.div`height: 14px; flex: none; background: #b2b2b2; display: flex;`;
const HThumb = styled.div`width: 1568px; height: 13px; margin: 0 10px 0 1px; border: 1px solid ${LINE}; background: ${PANEL}; display: grid; place-items: center;`;

const Tri = ({ d, s = 8, c = '#777' }: { d: 'u' | 'd' | 'l' | 'r'; s?: number; c?: string }) => {
  const path = { u: 'M0 6h8L4 1.500z', d: 'M0 2h8L4 6.500z', l: 'M6 0v8L1.500 4z', r: 'M2 0v8l4.500-4z' }[d];
  return <svg width={s} height={s} viewBox="0 0 8 8" fill={c}><path d={path} /></svg>;
};

const data: string[][] = [
  ['Зарплата', '7.27.2022', 'Подменный машинист 11ч', '-5500,00 ₽', 'опл'],
  ['Запчасти', '7.29.2022', 'Яблоко (на чем крестовина)', '-7000,00 ₽', 'опл'],
  ['Зарплата', '8.2.2022', 'Алексей база', '-1500,00 ₽', 'не опл'],
  ['Услуги нал', '8.3.2022', 'реал строй 8ч ковш', '17600,00 ₽', 'опл'],
  ['Зарплата', '8.3.2022', 'ковш 8ч Машинист Алексей', '-4000,00 ₽', 'не опл'],
  ['Топливо', '8.3.2022', '', '-4530,00 ₽', 'опл'],
  ['Услуги безнал', '8.4.2022', 'Виатенк ковш 8ч', '23200,00 ₽', 'опл'],
  ['Запчасти', '8.4.2022', 'ковш 8ч', '-4000,00 ₽', 'не опл'],
  ['Топливо', '8.5.2022', '', '-4431,00 ₽', 'опл'],
  ['Ремонт', '8.6.2022', 'ремонт по электрике', '-1500,00 ₽', 'опл'],
  ['Услуги нал', '8.8.2022', 'Алексей, частник 3ч', '9000,00 ₽', 'опл'],
  ['Зарплата', '8.8.2022', 'ковш 3ч', '-1500,00 ₽', ''],
  ['Услуги нал', '', '', '', ''],
  ['Услуги нал', '', '', '', ''],
];
const cols: [string, number][] = [['B', 98], ['C', 90], ['D', 225], ['E', 102], ['F', 84], ...'GHIJKLMNOP'.split('').map(c => [c, 101] as [string, number])];

function SheetArea() {
  return (
    <Center>
      <FormulaBar><NameBox>B323<Chev /></NameBox><Fx>fx</Fx><FormulaText>Услуги нал<Chev /></FormulaText></FormulaBar>
      <GridArea>
        <Sheet>
          <HeadRow>
            <Corner><svg width="10" height="10"><path d="M10 0v10H0z" fill="#999" /></svg></Corner>
            {cols.map(([c, w]) => <ColHead key={c} $w={w} $on={c === 'B'}>{c}</ColHead>)}
          </HeadRow>
          {Array.from({ length: 35 }, (_, i) => {
            const r = data[i] ?? ['', '', '', '', ''];
            return (
              <Line key={i}>
                <RowHead $on={i === 13}>{310 + i}</RowHead>
                <Cells $band={i % 2 === 1 && i < 26}>
                  <Cell $w={98}>{r[0]}</Cell><Cell $w={90} $a="center">{r[1]}</Cell><Cell $w={225} $pl={2}>{r[2]}</Cell>
                  <Cell $w={102} $a="right">{r[3]}</Cell><Cell $w={84} $a="right">{r[4]}</Cell>
                  {i === 13 && <><Cursor><CursorHandle /></Cursor><CellDrop><Tri d="d" c="#555" /></CellDrop></>}
                </Cells>
              </Line>
            );
          })}
        </Sheet>
        <VScroll>
          <ScrollBtn><Tri d="u" c="#888" /></ScrollBtn>
          <VThumb><svg width="5" height="14" stroke="#999"><path d="M0 .5h5M0 2.500h5M0 4.500h5M0 6.500h5M0 8.500h5M0 10.500h5M0 12.500h5" /></svg></VThumb>
          <ScrollBtn><Tri d="d" c="#888" /></ScrollBtn>
        </VScroll>
      </GridArea>
      <HScroll>
        <ScrollBtn><Tri d="l" c="#888" /></ScrollBtn>
        <HThumb><svg width="14" height="5" stroke="#999"><path d="M.5 0v5M2.500 0v5M4.500 0v5M6.500 0v5M8.500 0v5M10.500 0v5M12.500 0v5" /></svg></HThumb>
        <ScrollBtn><Tri d="r" c="#888" /></ScrollBtn>
      </HScroll>
    </Center>
  );
}

/* ---------- right panel ---------- */

const Panel = styled.div`width: 221px; flex: none; border-left: 1px solid ${LINE}; border-right: 1px solid ${LINE}; padding: 7px 10px 0 15px; display: flex; flex-direction: column; color: ${INK};`;
const Label = styled.div<{ $b?: boolean; $mt?: number; $ml?: number }>`
  height: 15px; font: ${p => (p.$b ? 700 : 400)} 11px/15px ${ARIAL}; margin: ${p => p.$mt ?? 0}px 0 0 ${p => p.$ml ?? 0}px; white-space: nowrap;
`;
const Flex = styled.div<{ $mt?: number; $gap?: number }>`display: flex; align-items: center; margin-top: ${p => p.$mt ?? 0}px; gap: ${p => p.$gap ?? 0}px;`;
const Rule = styled.div<{ $mt: number }>`height: 1px; background: ${LINE}; margin-top: ${p => p.$mt}px; width: 194px;`;
const Btn = styled.div`width: 21px; height: 21px; border: 1px solid ${LINE}; border-radius: 2px; background: ${FIELD}; display: grid; place-items: center;`;
const ColorBox = styled(Select)`padding: 1px 2px 1px 1px;`;
const Black = styled.div`width: 31px; height: 18px; background: #000;`;
const Spin = styled(Select)`justify-content: flex-end; gap: 6px; padding-right: 5px;`;
const SpinArrows = styled.div`display: flex; flex-direction: column; gap: 2px;`;
const Check = styled.div`width: 14px; height: 14px; border: 1px solid ${LINE}; border-radius: 2px; background: ${FIELD};`;
const RightRail = styled.div`width: 39px; padding-top: 15px; display: flex; flex-direction: column;`;
const RailItem = styled.div<{ $on?: boolean }>`height: ${p => (p.$on ? 30 : 38)}px; margin-bottom: ${p => (p.$on ? 4 : 0)}px; padding-left: 10px; display: flex; align-items: center; background: ${p => (p.$on ? '#636870' : 'transparent')};`;

const BorderIcon = ({ solid }: { solid: string }) => (
  <svg width="13" height="13" fill="none">
    <path d="M.5 .5h12v12H.5zM6.500 0v13M0 6.500h13" stroke="#888" strokeDasharray="1 1" />
    <path d={solid} stroke="#222" />
  </svg>
);
const borders = [
  ['M.5 .5h12v12H.5zM6.500 0v13M0 6.500h13', '', 'M6.500 0v13M0 6.500h13', 'M.5 .5h12v12H.5z', 'M0 13L13 0', 'M0 0l13 13'],
  ['M.5 0v13', 'M6.500 0v13', 'M12.500 0v13', 'M0 .5h13', 'M0 6.500h13', 'M0 12.500h13'],
];

function SidePanel() {
  return (
    <Panel>
      <Label $b>Заливка</Label>
      <Select $w={194}>Без заливки<Chev /></Select>
      <Rule $mt={8} />
      <Label $b $mt={8}>Стиль границ</Label>
      <Flex $mt={8}>
        <Select $w={93}><Glyph width="66" height="3" $ml={6}><path d="M0 1.500h60" stroke="#000" /></Glyph><Chev /></Select>
        <Label $ml={23}>Цвет</Label>
        <ColorBox $w={45} $ml={8}><Black /><Chev /></ColorBox>
      </Flex>
      <Label $mt={8}>Выберите границы, к которым надо</Label>
      <Label>применить выбранный стиль</Label>
      {borders.map((row, i) => (
        <Flex key={i} $mt={8} $gap={3}>{row.map((d, j) => <Btn key={j}><BorderIcon solid={d} /></Btn>)}</Flex>
      ))}
      <Rule $mt={8} />
      <Label $b $mt={8}>Отступ</Label>
      <Spin $w={60}>0<SpinArrows><Chev up ml={0} /><Chev ml={0} /></SpinArrows></Spin>
      <Label $b $mt={16}>Ориентация текста</Label>
      <Flex $mt={8}><Label>Угол</Label><Spin $w={60} $ml={8}>0 °<SpinArrows><Chev up ml={0} /><Chev ml={0} /></SpinArrows></Spin></Flex>
      <Label $b $mt={16}>Отображение</Label>
      <Flex $mt={8} $gap={8}><Check /><Label>Перенос текста</Label></Flex>
      <Flex $mt={8} $gap={8}><Check /><Label>Автоподбор ширины</Label></Flex>
      <Rule $mt={8} />
      <Flex $mt={8}><I n="cond" /><Label $ml={4}>Условное форматирование</Label><Chev ml={5} /></Flex>
    </Panel>
  );
}

/* ---------- bottom bars ---------- */

const Status = styled.div`height: 25px; flex: none; display: flex; border-top: 1px solid ${LINE}; background: ${PANEL}; align-items: stretch;`;
const NavArea = styled.div`width: 115px; border-right: 1px solid ${LINE}; display: flex; align-items: center; padding-left: 16px; gap: 11px;`;
const AddArea = styled.div`width: 60px; border-right: 1px solid ${LINE}; display: flex; align-items: center; padding-left: 12px; gap: 12px;`;
const SheetTab = styled.div<{ $w: number; $on?: boolean; $plain?: boolean }>`
  width: ${p => p.$w}px; text-align: center; font: ${p => (p.$on ? 700 : 400)} 11px/24px ${ARIAL}; white-space: nowrap;
  color: ${p => (p.$on ? '#333' : '#7f7f7f')}; border-right: 1px solid ${LINE};
  background: ${p => (p.$on ? FIELD : p.$plain ? PANEL : `linear-gradient(${FIELD} 4px, ${PANEL} 4px)`)};
`;
const ZoomArea = styled.div`margin: 0 28px 0 auto; display: flex; align-items: center; gap: 7px; font: 700 11px/24px ${ARIAL};`;

const Taskbar = styled.div`height: 40px; flex: none; background: #1c1c1c; display: flex; color: #fff;`;
const TaskItem = styled.div<{ $w: number; $on?: boolean; $run?: boolean }>`
  width: ${p => p.$w}px; height: 40px; display: grid; place-items: center; flex: none;
  background: ${p => (p.$on ? '#4a4a4a' : 'transparent')};
  ${p => p.$run && 'box-shadow: inset 0 -2px 0 #76b9ed;'}
`;
const Pad = styled.div<{ $w: number }>`width: ${p => p.$w}px; flex: none;`;
const Tray = styled.div`margin-left: auto; display: flex; align-items: center; font: 12px/27px ${SEGOE};`;
const Lang = styled.div`width: 24px; margin-left: 9px;`;
const Clock = styled.div`width: 62px; margin-left: 7px; text-align: center; font: 12px/18px ${SEGOE}; letter-spacing: -0.75px; white-space: nowrap;`;
const YBrowser = styled.div`width: 22px; height: 22px; border-radius: 50%; background: #f4f4f4; display: grid; place-items: center;`;

function BottomBars() {
  const tabs: [string, number][] = [['Транзакции', 84], ['Отчет', 53], ['Прибыль и убытки', 125], ['Баланс', 61], ['Категории', 77], ['Инструкции', 85]];
  return (
    <>
      <Status>
        <NavArea>
          <svg width="12" height="12" fill="#777"><path d="M1 0h1v12H1zM11 1v10L4 6z" /></svg>
          <svg width="12" height="12" fill="#777"><path d="M9 1v10L1 6z" /></svg>
          <svg width="12" height="12" fill="#777"><path d="M3 1v10l8-5z" /></svg>
          <svg width="12" height="12" fill="#777"><path d="M10 0h1v12h-1zM1 1v10l7-5z" /></svg>
        </NavArea>
        <AddArea>
          <svg width="13" height="12" stroke="#333"><path d="M6.500 0v12M.5 6.500h12" /></svg>
          <svg width="11" height="12" stroke="#333"><path d="M0 1.500h10M0 4.500h10M0 7.500h10M0 10.500h10" /></svg>
        </AddArea>
        {tabs.map(([t, w], i) => <SheetTab key={t} $w={w} $on={i === 0} $plain={i === 5}>{t}</SheetTab>)}
        <ZoomArea>
          <svg width="11" height="12" stroke="#333"><path d="M0 6.500h10" /></svg>Масштаб 100%
          <svg width="12" height="12" stroke="#333"><path d="M0 6.500h12M6.500 0v12" /></svg>
        </ZoomArea>
      </Status>
      <Taskbar>
        <TaskItem $w={48}><svg width="16" height="16" fill="#fff"><path d="M0 2.300l6.500-.9v6.200H0zM7.500 1.200L16 0v7.600H7.500zM0 8.600h6.500v6.100L0 13.800zM7.500 8.600H16V16l-8.500-1.200z" /></svg></TaskItem>
        <TaskItem $w={49}><svg width="18" height="18" fill="none" stroke="#fff" strokeWidth="1.300"><circle cx="11" cy="6.500" r="5" /><path d="M7.500 10L1.500 16.500" /></svg></TaskItem>
        <TaskItem $w={46}><svg width="18" height="16" fill="none" stroke="#fff"><path d="M1.500 4.500h10v7h-10zM1.500 2.500v-2M11.500 .5v2h-10M1.500 15.500v-2h10v2M15.500 0v4M15.500 9v7" /><rect x="14" y="5" width="3" height="3" fill="#fff" stroke="none" /></svg></TaskItem>
        <Pad $w={9} />
        <TaskItem $w={48}><svg width="24" height="24"><defs><linearGradient id="al" x1="0" y1="1" x2="1" y2="0"><stop offset="0" stopColor="#c03ff2" /><stop offset="1" stopColor="#5f6cf8" /></linearGradient></defs><circle cx="12" cy="12" r="12" fill="url(#al)" /><path d="M12 6q1.500 0 4 5t-.5 7q-3.500 1.200-7 0t-.5-7T12 6z" fill="#fff" /></svg></TaskItem>
        <Pad $w={13} />
        <TaskItem $w={40} $run><svg width="22" height="20"><path d="M0 1h8l1 2h13v16H0z" fill="#f7c94b" /><path d="M0 1h8l1 2H0z" fill="#d89b1d" /><path d="M4 10h14v9h-3v-5H8v5H4z" fill="#3a93dc" /></svg></TaskItem>
        <Pad $w={4} />
        <TaskItem $w={48}><svg width="24" height="24"><path d="M6.500 7V1.500h11V7" fill="none" stroke="#2fb1ee" strokeWidth="2" /><rect x="1" y="5" width="22" height="18" rx="2" fill="#f4f4f4" /><path d="M7.500 9.500h4v4h-4z" fill="#f04f23" /><path d="M12.500 9.500h4v4h-4z" fill="#6fae1c" /><path d="M7.500 14.500h4v4h-4z" fill="#1b9fe4" /><path d="M12.500 14.500h4v4h-4z" fill="#fcb913" /></svg></TaskItem>
        <Pad $w={2} />
        <TaskItem $w={48}><svg width="18" height="24"><rect width="18" height="24" rx="1" fill="#6f7f8d" /><rect x="2" y="2" width="14" height="4" fill="#4fd6f6" /><g fill="#dfe5ea"><path d="M2 8h4v4H2zM7 8h4v4H7zM12 8h4v4h-4zM2 13h4v4H2zM7 13h4v4H7zM2 18h4v4H2zM7 18h4v4H7z" /></g><path d="M12 13h4v9h-4z" fill="#124f8e" /></svg></TaskItem>
        <TaskItem $w={49}><svg width="22" height="22"><circle cx="11" cy="11" r="10.700" fill="#2a9fdb" /><path d="M4 11l12-5-2 11-4-3-2 2-.5-4 6-4-7.500 4z" fill="#fff" /></svg></TaskItem>
        <TaskItem $w={50}><svg width="24" height="24"><circle cx="12" cy="13" r="10.500" fill="#f9493a" /><path d="M2 8q1-3 3-4 0 2 3 3 4-1 5 1l3 6-4 8Q1 21 2 8z" fill="#fb8b26" /><path d="M15 0q8 6 7.500 13T15 22q5-6 3-12t-3-10z" fill="#fdd13a" /><circle cx="12" cy="13.500" r="5" fill="#7446d8" /><path d="M7 11q3-2 6 0l-2 2-5 1z" fill="#fc9d2a" /></svg></TaskItem>
        <TaskItem $w={48} $on $run><YBrowser><svg width="14" height="16" fill="none" stroke="#c9252b" strokeWidth="2.600"><path d="M1.500 1L7 8.500 12.500 1M7 8v8" /></svg></YBrowser></TaskItem>
        <Pad $w={1} />
        <TaskItem $w={48}><YaText $s={24} $f={17}>Я</YaText></TaskItem>
        <Pad $w={5} />
        <TaskItem $w={40} $run><DiskIcon s={24} /></TaskItem>
        <Tray>
          <svg width="14" height="10" fill="none" stroke="#fff" strokeWidth="1.300"><path d="M1.500 8L7 2.500 12.500 8" /></svg>
          <Glyph width="18" height="16" $ml={8} $ink="#fff"><path d="M5 2.500h11.500v8H4.500V7M10.500 11v3M7 14.500h7M1.500 1.500h4v4h-4zM3.500 6v4" /></Glyph>
          <Glyph width="18" height="16" $ml={7} $ink="#fff"><path d="M1.500 5.500h2L7.500 2v12l-4-3.500h-2zM9.500 6q1.500 2 0 4M11.500 4.500q3 3.500 0 7M13.500 3q4.500 5 0 10" /></Glyph>
          <Lang>РУС</Lang>
          <Clock>20:31<br />11.08.2022</Clock>
          <Glyph width="26" height="26" $ml={14}><path d="M2 3h16v13H9l-3 3v-3H2z" fill="#fff" stroke="none" /><path d="M4.500 6.500h11M4.500 9.500h11M4.500 12.500h7" stroke="#222" /><circle cx="17" cy="17.500" r="7.500" fill="#3a3a3a" stroke="#999" /><text x="13.700" y="21.500" fontSize="12" fontWeight="700" style={{ fill: '#fff' }}>2</text></Glyph>
          <Glyph width="11" height="40" $ml={4}><path d="M2.500 0v40" stroke="#777" /></Glyph>
        </Tray>
      </Taskbar>
    </>
  );
}

/* ---------- warning dialog ---------- */

const Dialog = styled.div`
  position: absolute; left: 614px; top: 490px; width: 693px; height: 161px; background: #fff; border: 1px solid #cbcbcb; border-radius: 5px;
  box-shadow: 0 6px 16px rgba(0, 0, 0, .28); overflow: hidden; display: flex; flex-direction: column; color: #444;
`;
const DialogHead = styled.div`height: 34px; flex: none; background: #f1f1f1; border-bottom: 1px solid #cbcbcb; display: flex; align-items: center; justify-content: space-between; padding: 1px 11px 0 23px; font: 700 12px/33px ${ARIAL};`;
const DialogBody = styled.div`display: flex; padding: 20px 0 0 22px; gap: 13px;`;
const Message = styled.div`font: 12px/17px ${ARIAL}; white-space: nowrap;`;
const OkButton = styled.div`width: 86px; height: 22px; margin: auto auto 16px 303px; background: #7d858c; color: #fff; font: 700 11px/21px ${ARIAL}; text-align: center; border-radius: 1px;`;

export default function App() {
  return (
    <Screen>
      <Global />
      <BrowserTop />
      <EditorHeader />
      <Main>
        <LeftRail>{['search', 'comment', 'spell', 'horn', 'info'].map(n => <I key={n} n={n} />)}</LeftRail>
        <SheetArea />
        <SidePanel />
        <RightRail>
          <RailItem $on><I n="rCell" /></RailItem>
          {['rTable', 'rShape', 'rImage', 'rChart', 'rPara', 'rArt', 'rPivot', 'rSlicer'].map(n => <RailItem key={n}><I n={n} ink="#7c7c7c" /></RailItem>)}
        </RightRail>
      </Main>
      <BottomBars />
      <Dialog>
        <DialogHead><span />Предупреждение<svg width="12" height="12" stroke="#999" fill="none"><path d="M.5 .5l11 11M11.500 .5l-11 11" /></svg></DialogHead>
        <DialogBody>
          <svg width="35" height="40" viewBox="0 0 35 40"><path d="M15.500 5q2-2.500 4 0L34 31q.5 3-2 3H3q-2.500 0-2-3z" fill="#ffcf3a" /><path d="M15.600 13h4l-.8 12h-2.400zM15.700 27h3.800v3.500h-3.800z" fill="#fff" /></svg>
          <Message>В ходе работы с документом произошла ошибка.<br />Используйте опцию 'Скачать как...', чтобы сохранить резервную копию файла на жесткий диск компьютера.</Message>
        </DialogBody>
        <OkButton>OK</OkButton>
      </Dialog>
    </Screen>
  );
}
